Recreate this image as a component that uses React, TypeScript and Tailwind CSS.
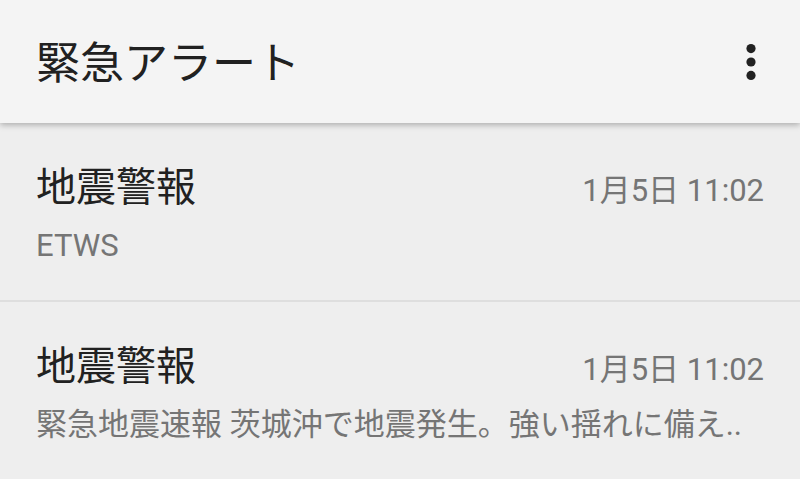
import React from 'react';

const FONT = 'font-[Roboto,"Noto_Sans_CJK_JP",sans-serif]';

interface Alert {
  title: string;
  time: string;
  body: string;
}

const alerts: Alert[] = [
  { title: '地震警報', time: '1月5日 11:02', body: 'ETWS' },
  { title: '地震警報', time: '1月5日 11:02', body: '緊急地震速報 茨城沖で地震発生。強い揺れに備え..' },
];

const Kebab = () => (
  <svg width="12" height="40" viewBox="0 0 12 40" className="text-[#212121]">
    <circle cx="6" cy="6.6" r="4.6" fill="currentColor" />
    <circle cx="6" cy="20" r="4.6" fill="currentColor" />
    <circle cx="6" cy="33.4" r="4.6" fill="currentColor" />
  </svg>
);

export default function App() {
  return (
    <div className={`${FONT} w-[800px] h-[479px] overflow-hidden bg-[#eeeeee]`}>
      {/* Toolbar */}
      <header className="relative z-10 h-[123px] bg-[#f4f4f4] shadow-[0_2px_6px_rgba(0,0,0,0.28)] flex items-center justify-between pl-[36px] pr-[43px]">
        <h1 className="text-[44px] leading-none text-[#212121] pt-[5px]">緊急アラート</h1>
        <Kebab />
      </header>

      {/* Alert list */}
      <ul>
        {alerts.map((a, i) => (
          <li key={i} className="h-[179px] border-b-2 border-[#dedede] px-[36px] pt-[41px]">
            <div className="flex items-baseline justify-between">
              <span className="text-[40px] leading-[48px] text-[#212121]">{a.title}</span>
              <span className="text-[31px] leading-[48px] text-[#757575]">{a.time}</span>
            </div>
            <p className="mt-[11px] text-[31px] leading-[40px] text-[#757575] whitespace-nowrap">{a.body}</p>
          </li>
        ))}
      </ul>
    </div>
  );
}
